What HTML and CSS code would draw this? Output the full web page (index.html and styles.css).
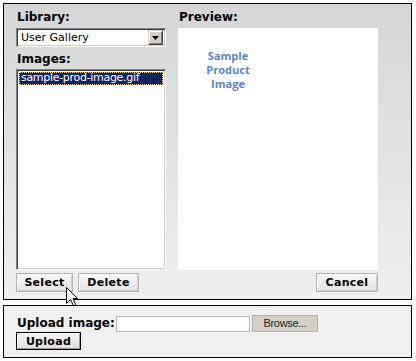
FILE: index.html
```html
<!DOCTYPE html>
<html>
<head>
<meta charset="utf-8">
<link rel="stylesheet" href="styles.css">
</head>
<body>
<div class="page">
  <div class="panel-top">
    <div class="grid">
      <div class="label">Library:</div>
      <div class="label">Preview:</div>
      <div class="select">
        <span class="select-text">User Gallery</span>
        <span class="select-btn"><svg width="7" height="4" viewBox="0 0 7 4"><path d="M0 0h7L3.5 4z" fill="#000"/></svg></span>
      </div>
      <div class="preview">
        <div class="sample">Sample<br>Product<br>Image</div>
      </div>
      <div class="label images-label">Images:</div>
      <div class="listbox">
        <div class="item">sample-prod-image.gif</div>
      </div>
      <div class="btn-row">
        <button class="btn btn-select">Select</button>
        <button class="btn btn-delete">Delete</button>
      </div>
      <div class="btn-row right">
        <button class="btn btn-cancel">Cancel</button>
      </div>
    </div>
  </div>
  <div class="panel-bottom">
    <div class="upload-row">
      <span class="label upload-label">Upload image:</span>
      <span class="file-input"></span>
      <span class="browse">Browse...</span>
    </div>
    <button class="upload-btn">Upload</button>
  </div>
  <svg class="cursor" width="12" height="20" viewBox="0 0 12 20"><path d="M0.5 0.5V16.5L4.5 12.5L7.5 18.8L9.8 17.8L7 11.5H11.5Z" fill="#fff" stroke="#000" stroke-width="1"/></svg>
</div>
</body>
</html>
```

FILE: styles.css
```css
html, body {
  margin: 0;
  padding: 0;
  background: #fff;
}
.page {
  position: relative;
  padding: 3px 0 0 3px;
  font-family: "DejaVu Sans", Verdana, sans-serif;
  color: #000;
}
.panel-top {
  box-sizing: border-box;
  width: 409px;
  height: 297px;
  border: 1px solid #000;
  background: linear-gradient(#d6d6d6, #efefef);
}
.grid {
  display: grid;
  grid-template-columns: 150px 200px;
  column-gap: 12px;
  padding: 6px 0 0 12px;
}
.label {
  font-weight: bold;
  font-size: 12px;
  line-height: 15px;
  height: 15px;
  margin-bottom: 3px;
  padding-left: 1px;
}
.images-label {
  margin-top: 5px;
  margin-bottom: 2px;
}
.select {
  box-sizing: border-box;
  height: 19px;
  background: #fff;
  border: 1px solid;
  border-color: #808080 #fff #fff #808080;
  box-shadow: inset 1px 1px #404040, inset -1px -1px #d4d0c8;
  display: flex;
  align-items: center;
  justify-content: space-between;
  padding: 0 2px 0 4px;
}
.select-text {
  font-size: 11px;
  line-height: 13px;
}
.select-btn {
  box-sizing: border-box;
  width: 15px;
  height: 15px;
  background: #d4d0c8;
  border: 1px solid;
  border-color: #d4d0c8 #404040 #404040 #d4d0c8;
  box-shadow: inset 1px 1px #fff, inset -1px -1px #808080;
  display: flex;
  align-items: center;
  justify-content: center;
}
.preview {
  grid-column: 2;
  grid-row: 2 / 5;
  background: #fff;
}
.sample {
  width: 100px;
  padding-top: 21px;
  text-align: center;
  font-family: "Open Sans", "Noto Sans", sans-serif;
  font-weight: bold;
  font-size: 11px;
  line-height: 14px;
  color: #5a87cf;
}
.listbox {
  box-sizing: border-box;
  height: 201px;
  background: #fff;
  border: 1px solid;
  border-color: #808080 #fff #fff #808080;
  box-shadow: inset 1px 1px #404040, inset -1px -1px #d4d0c8;
  padding: 2px;
}
.item {
  box-sizing: border-box;
  height: 13px;
  background: #0a246a;
  color: #fff;
  font-size: 11px;
  line-height: 12px;
  letter-spacing: -0.3px;
  outline: 1px dotted #f2d27a;
  outline-offset: -1px;
  padding-left: 2px;
}
.btn-row {
  display: flex;
  gap: 5px;
  margin-top: 3px;
}
.btn-row.right {
  justify-content: flex-end;
}
.btn {
  box-sizing: border-box;
  height: 19px;
  padding: 0;
  font-family: "DejaVu Sans", Verdana, sans-serif;
  font-weight: bold;
  font-size: 11px;
  letter-spacing: 0.3px;
  color: #000;
  background: linear-gradient(#fafafa, #e2e2e2);
  border: 1px solid #b4b4b4;
  box-shadow: inset 1px 1px #fff, inset -1px -1px #cfcfcf;
}
.btn-select { width: 57px; }
.btn-delete { width: 61px; }
.btn-cancel { width: 62px; }
.panel-bottom {
  box-sizing: border-box;
  width: 409px;
  height: 53px;
  margin-top: 5px;
  border: 1px solid #000;
  background: #f0f0f0;
  padding: 9px 0 0 12px;
}
.upload-row {
  display: flex;
  align-items: center;
  height: 17px;
}
.upload-label {
  display: inline-block;
  width: 99px;
  height: 17px;
  line-height: 17px;
  margin: 0;
}
.file-input {
  box-sizing: border-box;
  width: 134px;
  height: 16px;
  margin-top: 1px;
  background: #fff;
  border: 1px solid #b9b9b9;
}
.browse {
  box-sizing: border-box;
  width: 66px;
  height: 17px;
  margin-left: 2px;
  background: #d4d0c8;
  border: 1px solid #b5b1a9;
  font-family: "Liberation Sans", Arial, sans-serif;
  font-size: 11px;
  line-height: 15px;
  letter-spacing: -0.3px;
  text-align: center;
  color: #222;
}
.upload-btn {
  display: block;
  box-sizing: border-box;
  width: 65px;
  height: 18px;
  padding: 0;
  font-family: "DejaVu Sans", Verdana, sans-serif;
  font-weight: bold;
  font-size: 11px;
  letter-spacing: 0.3px;
  color: #000;
  background: linear-gradient(#f4f4f4, #dedede);
  border: 1px solid #000;
  box-shadow: inset 1px 1px #fff, inset -1px -1px #9a9a9a;
}
.cursor {
  position: absolute;
  left: 66px;
  top: 287px;
}
```
